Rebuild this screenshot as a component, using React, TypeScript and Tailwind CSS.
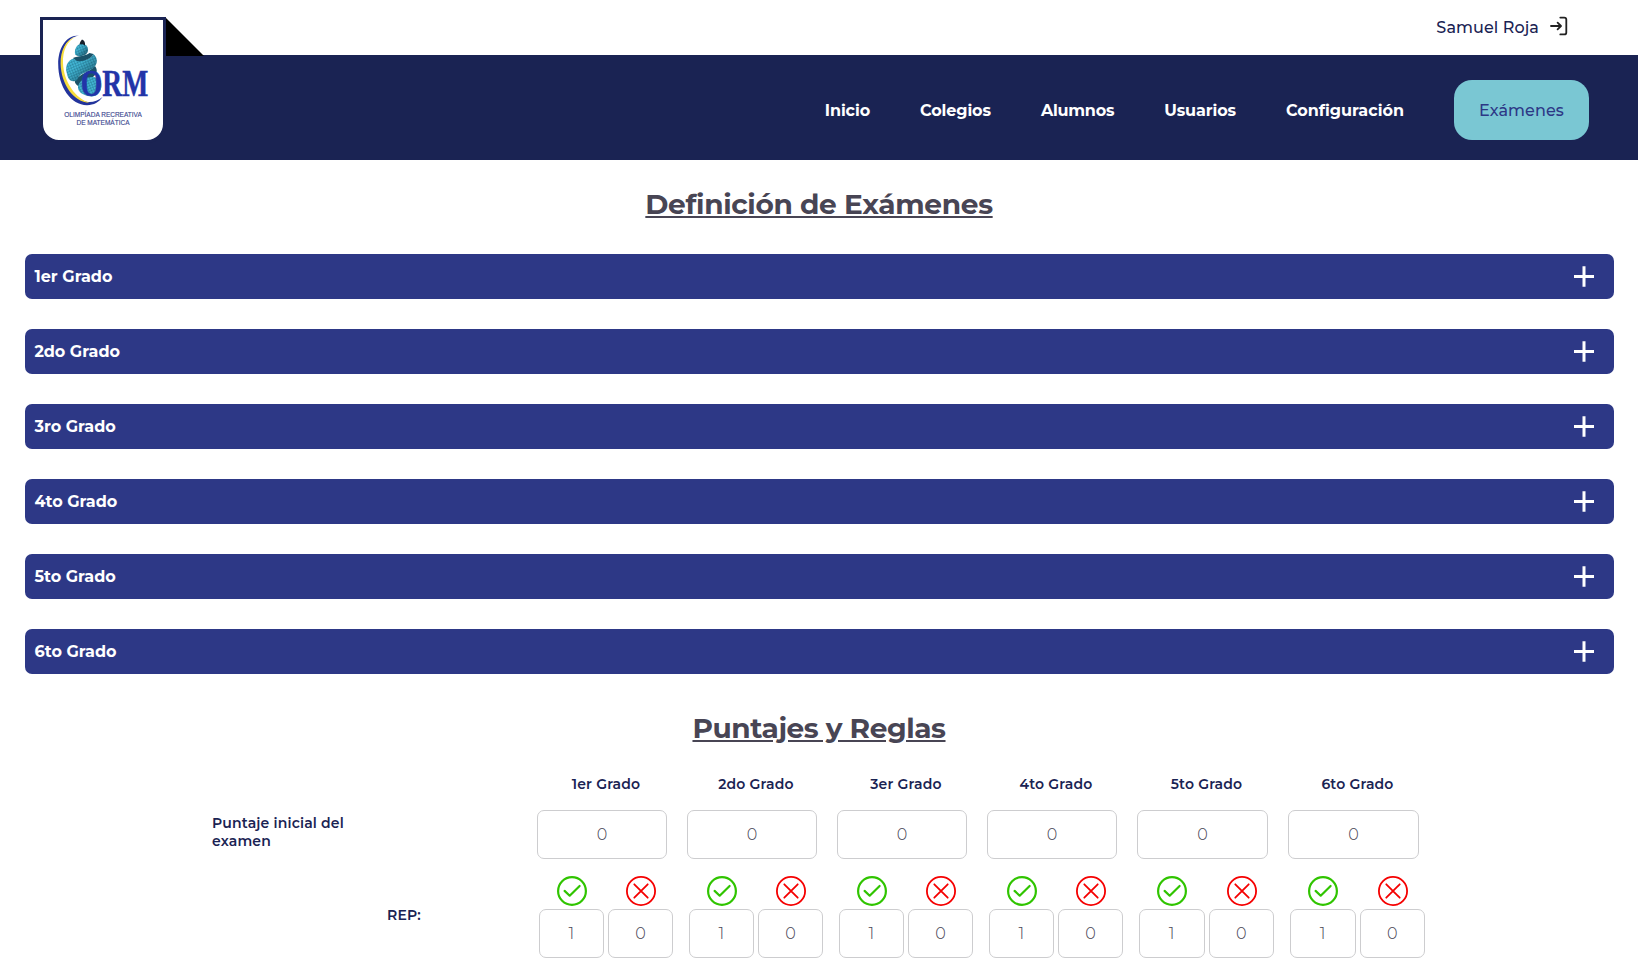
import React from 'react';

const navLinks = [
  { label: 'Inicio', tracking: 'tracking-[-0.100px]' },
  { label: 'Colegios', tracking: 'tracking-[-0.100px]' },
  { label: 'Alumnos', tracking: 'tracking-[-0.240px]' },
  { label: 'Usuarios', tracking: 'tracking-[-0.100px]' },
  { label: 'Configuración', tracking: 'tracking-normal' },
];
const sections = ['1er Grado', '2do Grado', '3ro Grado', '4to Grado', '5to Grado', '6to Grado'];
const columns = ['1er Grado', '2do Grado', '3er Grado', '4to Grado', '5to Grado', '6to Grado'];

const gridColumns = 'grid grid-cols-[repeat(4,150px)_repeat(2,151px)]';

function Logo() {
  return (
    <svg viewBox="0 0 120 120" className="block h-[120px] w-[120px]" role="img" aria-label="ORM">
      <defs>
        <pattern id="scales" width="2.600" height="2.600" patternUnits="userSpaceOnUse" patternTransform="rotate(-22)">
          <rect width="3" height="3" fill="#42b4d2" />
          <path d="M0 0H3M0 0V3" stroke="#1d6d88" strokeWidth="0.700" />
        </pattern>
        <linearGradient id="shade" x1="0" x2="1" y1="0" y2="1">
          <stop offset="0.400" stopColor="#0b2f40" stopOpacity="0" />
          <stop offset="1" stopColor="#0b2f40" stopOpacity="0.750" />
        </linearGradient>
      </defs>
      <path d="M36 15.400C22 15.400 15.200 29 15.200 44C15.200 67 28 85.200 44 85.200C51 85.200 56 82 59.500 77C55 81 50 82.400 45 82C30 80 19 63 18.600 43C18.400 29 24 17.400 36 15.400Z" fill="#23349c" />
      <path d="M33 16.800C22.500 19.500 17.400 31 17.600 43.500C18 64 30.500 82.300 46.500 82.700C33 79 20.600 62 20 43C19.600 31 24 20.500 33 16.800Z" fill="#f6dc3c" />
      <path d="M32 60C37 54 46 52 52 46C55 50 54 54 50 57C44 59 40 62 38 67C34 66 31 63 32 60Z" fill="#1a5269" />
      <path d="M24 54C21 45 26 38 34 38C40 42 48 39 50.500 34C56 39 54 46 49 49C43 53 36 53 34 60C29 63 25 60 24 54Z" fill="url(#scales)" />
      <path d="M24 54C21 45 26 38 34 38C40 42 48 39 50.500 34C56 39 54 46 49 49C43 53 36 53 34 60C29 63 25 60 24 54Z" fill="url(#shade)" />
      <path d="M30 38C35 36 43 36 46.500 33L50.500 34C48 39 40 42 34 41Z" fill="#1a5269" />
      <path d="M32 34C31 27 36 23 40 23.500C45 25 46 30 44 33C41 37 33 37 32 34Z" fill="url(#scales)" />
      <path d="M32 34C31 27 36 23 40 23.500C45 25 46 30 44 33C41 37 33 37 32 34Z" fill="url(#shade)" />
      <path d="M35 66C38 56 55 54 58 62C60 70 55 76 49 76.500C42 76 34 73 35 66Z" fill="url(#scales)" />
      <path d="M36.500 24.500C37 21.500 38 21 39 19.500C41 20 42.500 22 42 25.500C40 24 38 24 36.500 24.500Z" fill="#17202b" />
      <text transform="translate(37.800 76) scale(0.745 1)" fill="#2234a8" stroke="#2234a8" strokeWidth="0.500" className="font-['Liberation_Serif',serif] text-[37px] font-bold">
        ORM
      </text>
      <text x="21.300" y="96.700" textLength="77.500" lengthAdjust="spacingAndGlyphs" fill="#3d4890" stroke="#3d4890" strokeWidth="0.150" className="font-['Liberation_Sans',sans-serif] text-[7.400px]">
        OLIMPÍADA RECREATIVA
      </text>
      <text x="33.500" y="104.700" textLength="53" lengthAdjust="spacingAndGlyphs" fill="#3d4890" stroke="#3d4890" strokeWidth="0.150" className="font-['Liberation_Sans',sans-serif] text-[7.400px]">
        DE MATEMÁTICA
      </text>
    </svg>
  );
}

function LogoutIcon() {
  return (
    <svg viewBox="0 0 18 20" className="h-5 w-[18px]" fill="none" stroke="#222" strokeWidth="1.800" strokeLinecap="round" strokeLinejoin="round">
      <path d="M10.300 1.600H14.300Q16.300 1.600 16.300 3.600V16.400Q16.300 18.400 14.300 18.400H10.300" />
      <path d="M1 10H10.300" />
      <path d="M7.600 6.700L11 10L7.600 13.300" />
    </svg>
  );
}

function PlusIcon() {
  return (
    <svg viewBox="0 0 20 21" className="h-[21px] w-5" stroke="white" strokeWidth="3">
      <path d="M0 10.500H20M10 0.300V20.700" />
    </svg>
  );
}

function CheckIcon() {
  return (
    <svg viewBox="0 0 30 30" className="h-[30px] w-[30px]" fill="none" stroke="#30c400" strokeWidth="2.200">
      <circle cx="15" cy="15" r="13.900" />
      <path d="M7.600 14.900L12.700 19.700L22.600 10" strokeLinecap="round" strokeLinejoin="round" />
    </svg>
  );
}

function CrossIcon() {
  return (
    <svg viewBox="0 0 30 30" className="h-[30px] w-[30px]" fill="none" stroke="#f50000" strokeWidth="1.800">
      <circle cx="15" cy="15" r="14.100" />
      <path d="M8.300 8.300L21.700 21.700M21.700 8.300L8.300 21.700" strokeLinecap="round" />
    </svg>
  );
}

function Field({ value }: { value: string }) {
  return (
    <input
      defaultValue={value}
      className="block h-[49px] w-full rounded-[7px] border border-[#cdcdcf] bg-white pb-px text-center text-base font-light text-[#484554] outline-none"
    />
  );
}

function ScoreField({ value, icon }: { value: string; icon: React.ReactNode }) {
  return (
    <div className="flex min-w-0 flex-1 flex-col gap-[3px]">
      <div className="flex justify-center pl-[0.500px]">{icon}</div>
      <Field value={value} />
    </div>
  );
}

export default function App() {
  return (
    <div className="min-h-[968px] bg-white font-['Montserrat','Inter',sans-serif] [font-variant-ligatures:none]">
      <header>
        <div className="flex h-[55px] items-center justify-end gap-[11px] pr-[70px] text-base font-medium text-[#1a2353]">
          <span className="tracking-[0.090px]">Samuel Roja</span>
          <span className="pb-[3px]">
            <LogoutIcon />
          </span>
        </div>
        <div className="relative flex h-[105px] items-start justify-end bg-[#1a2353] pt-[25px] pr-[49px]">
          <div className="absolute -top-[38px] left-10 w-[126px] rounded-b-[19px] border-[3px] border-[#1a2353] bg-white">
            <Logo />
            <svg viewBox="0 0 38 38" className="absolute -top-[2px] -right-[41px] h-[38px] w-[38px]">
              <path d="M0 0L38 38H0Z" fill="black" />
            </svg>
          </div>
          <nav className="flex h-[60px] items-center gap-[50px] text-base font-bold text-white">
            {navLinks.map((link) => (
              <a key={link.label} className={`pt-px ${link.tracking}`}>
                {link.label}
              </a>
            ))}
            <a className="flex h-[60px] items-center rounded-[18px] bg-[#7ac7d3] px-[25px] pt-px font-medium tracking-[0.100px] text-[#2d3886]">
              Exámenes
            </a>
          </nav>
        </div>
      </header>

      <main>
        <h1 className="mt-[27px] mb-[33px] text-center text-[28px] leading-[34px] font-bold tracking-[-0.340px] text-[#484554] underline">
          Definición de Exámenes
        </h1>
        <div className="flex flex-col gap-[30px] pr-6 pl-[25px]">
          {sections.map((name) => (
            <div key={name} className="flex h-[45px] items-center justify-between rounded-[7px] bg-[#2d3886] pr-5 pl-[9.500px] text-white">
              <span className="text-base font-bold">{name}</span>
              <PlusIcon />
            </div>
          ))}
        </div>

        <h2 className="mt-[37px] mb-[29px] text-center text-[28px] leading-[34px] font-bold tracking-[-0.420px] text-[#484554] underline">
          Puntajes y Reglas
        </h2>
        <div className="text-sm font-semibold tracking-[0.170px] text-[#1a2353]">
          <div className={`${gridColumns} pl-[537px]`}>
            {columns.map((name) => (
              <div key={name} className="pr-3 text-center leading-5">
                {name}
              </div>
            ))}
          </div>
          <div className="mt-4 flex items-center pl-[212px]">
            <div className="w-[325px] shrink-0 pb-[6px] leading-[18px]">
              <div className="w-[150px]">Puntaje inicial del examen</div>
            </div>
            <div className={gridColumns}>
              {columns.map((name) => (
                <div key={name} className="pr-5">
                  <Field value="0" />
                </div>
              ))}
            </div>
          </div>
          <div className="mt-[17px] flex items-center pl-[387px]">
            <div className="w-[152px] shrink-0 pb-1">REP:</div>
            <div className={gridColumns}>
              {columns.map((name) => (
                <div key={name} className="flex gap-1 pr-4">
                  <ScoreField value="1" icon={<CheckIcon />} />
                  <ScoreField value="0" icon={<CrossIcon />} />
                </div>
              ))}
            </div>
          </div>
        </div>
      </main>
    </div>
  );
}
